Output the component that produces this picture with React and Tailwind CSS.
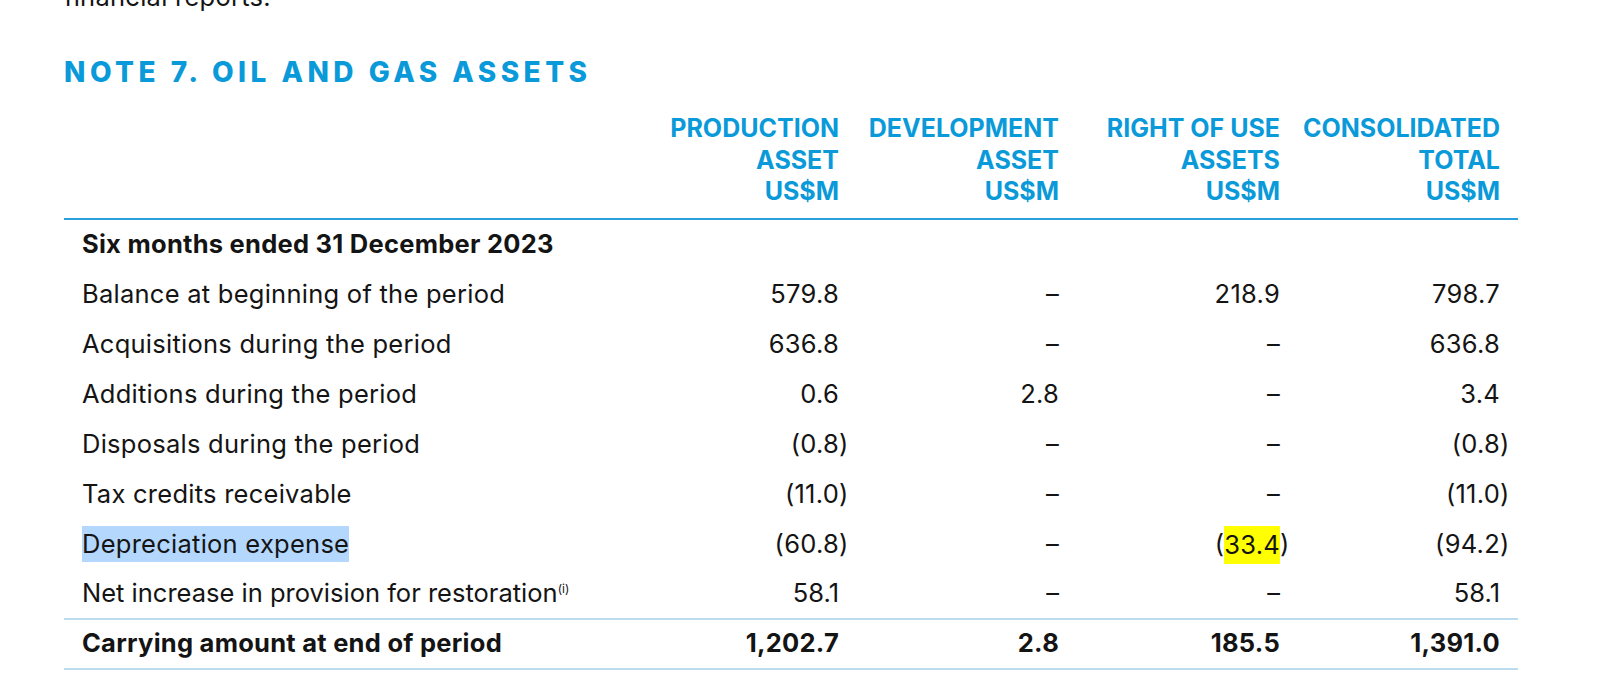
const rows = [
  { label: "Balance at beginning of the period", v: ["579.8", "-", "218.9", "798.7"] },
  { label: "Acquisitions during the period", v: ["636.8", "-", "-", "636.8"] },
  { label: "Additions during the period", v: ["0.6", "2.8", "-", "3.4"] },
  { label: "Disposals during the period", v: ["(0.8)", "-", "-", "(0.8)"] },
  { label: "Tax credits receivable", v: ["(11.0)", "-", "-", "(11.0)"] },
  { label: "Depreciation expense", v: ["(60.8)", "-", "(33.4)", "(94.2)"], mark: true },
];

const heads = [
  ["PRODUCTION", "ASSET", "US$M"],
  ["DEVELOPMENT", "ASSET", "US$M"],
  ["RIGHT OF USE", "ASSETS", "US$M"],
  ["CONSOLIDATED", "TOTAL", "US$M"],
];

// digits line up on the right, closing bracket hangs past them
const Num = ({ value, yellow }) => {
  if (value === "-") {
    return (
      <div className="flex justify-end">
        <span>–</span>
        <span className="inline-block w-[8px]"></span>
      </div>
    );
  }
  const neg = value.startsWith("(");
  const inner = neg ? value.slice(1, -1) : value;
  return (
    <div className="flex justify-end items-center">
      {neg && <span>(</span>}
      {yellow ? (
        <span className="inline-block bg-[#ffff00] leading-[38px]">{inner}</span>
      ) : (
        <span>{inner}</span>
      )}
      <span className="inline-block w-[8px]">{neg ? ")" : ""}</span>
    </div>
  );
};

const App = () => {
  return (
    <div className="w-[1600px] h-[680px] bg-white overflow-hidden font-['Inter',sans-serif] text-[#141414]">
      <div className="pl-[64px] w-[1518px]">
        <p className="text-[25.5px] leading-[32px] tracking-[0.01em] -mt-[19px]">financial reports.</p>

        <h2 className="mt-[41px] text-[28px] leading-[36px] font-extrabold tracking-[0.16em] text-[#0a9ad9]">
          NOTE 7. OIL AND GAS ASSETS
        </h2>

        <div className="mt-[23px] grid grid-cols-[563px_220px_220px_221px_220px] pr-[10px] pb-[10px] border-b-2 border-[#2a9fdc]">
          <div></div>
          {heads.map((h, i) => (
            <div key={i} className="text-right pr-[8px] text-[25px] leading-[31.5px] font-bold text-[#0a9ad9]">
              {h.map((t) => (
                <div key={t}>{t}</div>
              ))}
            </div>
          ))}
        </div>

        <div className="grid grid-cols-[563px_220px_220px_221px_220px] pr-[10px] h-[50px] items-center text-[25.5px] tracking-[0.01em] font-bold">
          <div className="pl-[18px]">Six months ended 31 December 2023</div>
        </div>

        {rows.map((r) => (
          <div
            key={r.label}
            className="grid grid-cols-[563px_220px_220px_221px_220px] pr-[10px] h-[50px] items-center text-[25.5px] tracking-[0.01em]"
          >
            <div className="pl-[18px]">
              {r.mark ? (
                <span className="inline-block bg-[#b4d7fe] leading-[36px]">{r.label}</span>
              ) : (
                r.label
              )}
            </div>
            {r.v.map((v, i) => (
              <Num key={i} value={v} yellow={r.mark && i === 2} />
            ))}
          </div>
        ))}

        <div className="grid grid-cols-[563px_220px_220px_221px_220px] pr-[10px] h-[50px] items-center text-[25.5px] border-b-2 border-[#bcdcef]">
          <div className="pl-[18px]">
            Net increase in provision for restoration
            <span className="text-[12px] relative -top-[9px]">(i)</span>
          </div>
          <Num value="58.1" />
          <Num value="-" />
          <Num value="-" />
          <Num value="58.1" />
        </div>

        <div className="grid grid-cols-[563px_220px_220px_221px_220px] pr-[10px] h-[50px] items-center text-[25.5px] tracking-[0.01em] font-bold border-b-2 border-[#bcdcef]">
          <div className="pl-[18px]">Carrying amount at end of period</div>
          <Num value="1,202.7" />
          <Num value="2.8" />
          <Num value="185.5" />
          <Num value="1,391.0" />
        </div>
      </div>
    </div>
  );
};

export default App;
